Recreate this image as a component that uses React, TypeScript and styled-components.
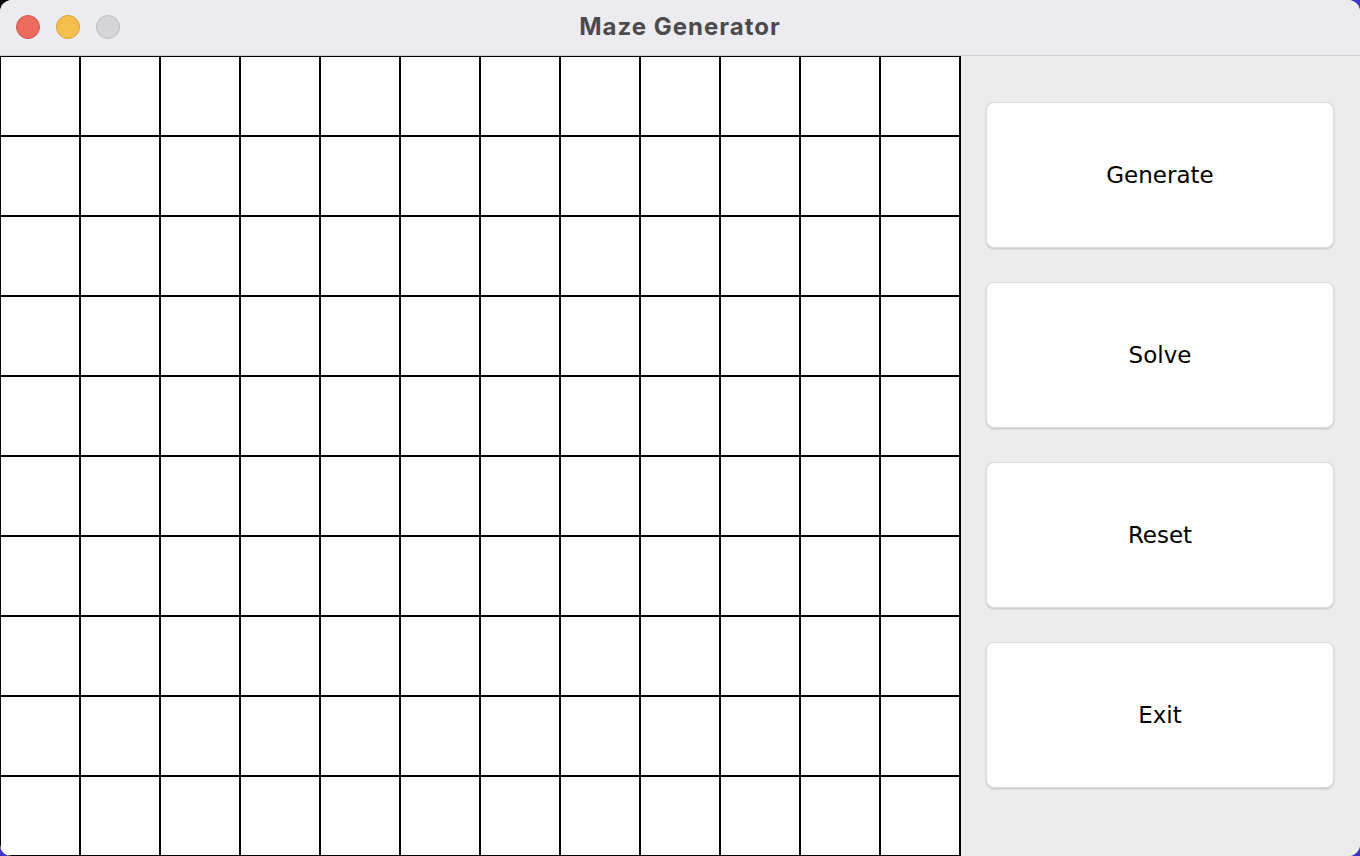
import React from "react";
import styled, { createGlobalStyle } from "styled-components";

const Global = createGlobalStyle`
  html, body {
    margin: 0;
    padding: 0;
    width: 1360px;
    height: 856px;
    overflow: hidden;
    background: linear-gradient(135deg, #000 0 1.6%, #3a37c8 1.6%);
  }
  * { box-sizing: border-box; }
`;

const Window = styled.div`
  width: 1360px;
  height: 856px;
  border-radius: 12px;
  overflow: hidden;
  display: flex;
  flex-direction: column;
  background: #ececec;
`;

const TitleBar = styled.div`
  height: 56px;
  flex: none;
  display: grid;
  grid-template-columns: 140px 1fr 140px;
  align-items: center;
  background: #ecebf0;
  border-bottom: 1px solid #d2d1d6;
`;

const Lights = styled.div`
  display: flex;
  gap: 16px;
  padding-left: 16px;
  padding-bottom: 1px;
`;

const Light = styled.span<{ $fill: string; $ring: string }>`
  width: 24px;
  height: 24px;
  border-radius: 50%;
  background: ${(p) => p.$fill};
  border: 1px solid ${(p) => p.$ring};
`;

const Title = styled.div`
  text-align: center;
  font-family: Inter, "Open Sans", sans-serif;
  font-weight: 700;
  font-size: 24px;
  letter-spacing: 1px;
  color: #4b4b4d;
  padding-bottom: 2px;
`;

const Body = styled.div`
  flex: 1;
  display: flex;
`;

const Board = styled.div`
  width: 960px;
  height: 800px;
  display: grid;
  grid-template-columns: repeat(12, 80px);
  grid-template-rows: repeat(10, 80px);
  background: #fff;
`;

const Cell = styled.div`
  border: 1px solid #000;
  background: #fff;
`;

const Panel = styled.div`
  flex: 1;
  display: flex;
  flex-direction: column;
  gap: 34px;
  padding: 46px 26px 0 25px;
  background: #ececec;
  border-left: 1px solid #000;
`;

const Button = styled.button`
  height: 146px;
  width: 100%;
  background: #fff;
  border: 1px solid #dcdcdc;
  border-radius: 8px;
  box-shadow: 0 1px 2px rgba(0, 0, 0, 0.18);
  font-family: "DejaVu Sans", sans-serif;
  font-size: 23px;
  color: #000;
  cursor: pointer;
  padding: 0;
`;

const labels = ["Generate", "Solve", "Reset", "Exit"];

export default function App() {
  return (
    <>
      <Global />
      <Window>
        <TitleBar>
          <Lights>
            <Light $fill="#ed6a5e" $ring="#d25a4f" />
            <Light $fill="#f5bf4f" $ring="#d8a23b" />
            <Light $fill="#d5d4d9" $ring="#bdbcc1" />
          </Lights>
          <Title>Maze Generator</Title>
          <div />
        </TitleBar>
        <Body>
          <Board>
            {Array.from({ length: 120 }, (_, i) => (
              <Cell key={i} />
            ))}
          </Board>
          <Panel>
            {labels.map((l) => (
              <Button key={l}>{l}</Button>
            ))}
          </Panel>
        </Body>
      </Window>
    </>
  );
}
